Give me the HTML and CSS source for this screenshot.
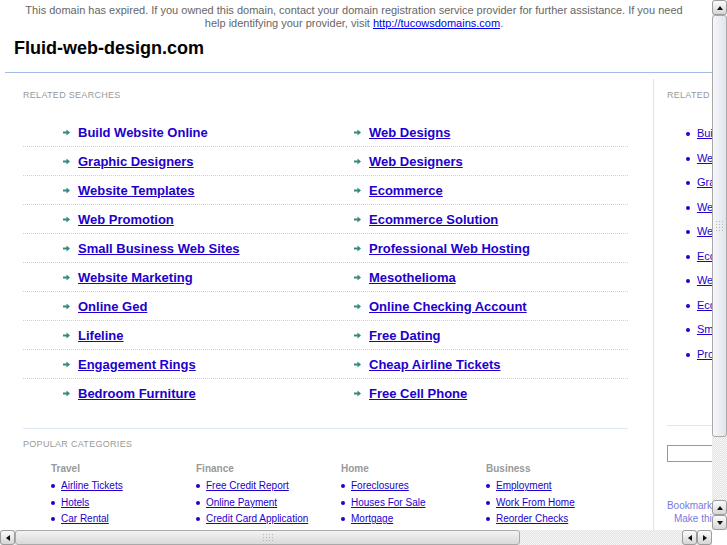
FILE: index.html
```html
<!DOCTYPE html>
<html lang="en">
<head>
  <meta charset="UTF-8" />
  <title>Fluid-web-design.com</title>
  <link rel="stylesheet" href="styles.css">
</head>
<body>
  <div class="page">
    <p class="notice">This domain has expired. If you owned this domain, contact your domain registration service provider for further assistance. If you need help identifying your provider, visit <a href="#">http://tucowsdomains.com</a>.</p>

    <div class="header">
      <h1>Fluid-web-design.com</h1>
    </div>

    <div class="main">
      <div class="content">
        <h3 class="label">Related Searches</h3>

        <!-- related searches, two per row -->
        <div class="searches">
          <div class="row">
            <div class="item"><svg class="arrow" viewBox="0 0 8 7"><path d="M0 2.4h4V0l4 3.5L4 7V4.6H0z"/></svg><a href="#" class="hover">Build Website Online</a></div>
            <div class="item"><svg class="arrow" viewBox="0 0 8 7"><path d="M0 2.4h4V0l4 3.5L4 7V4.6H0z"/></svg><a href="#">Web Designs</a></div>
          </div>
          <div class="row">
            <div class="item"><svg class="arrow" viewBox="0 0 8 7"><path d="M0 2.4h4V0l4 3.5L4 7V4.6H0z"/></svg><a href="#">Graphic Designers</a></div>
            <div class="item"><svg class="arrow" viewBox="0 0 8 7"><path d="M0 2.4h4V0l4 3.5L4 7V4.6H0z"/></svg><a href="#">Web Designers</a></div>
          </div>
          <div class="row">
            <div class="item"><svg class="arrow" viewBox="0 0 8 7"><path d="M0 2.4h4V0l4 3.5L4 7V4.6H0z"/></svg><a href="#">Website Templates</a></div>
            <div class="item"><svg class="arrow" viewBox="0 0 8 7"><path d="M0 2.4h4V0l4 3.5L4 7V4.6H0z"/></svg><a href="#">Ecommerce</a></div>
          </div>
          <div class="row">
            <div class="item"><svg class="arrow" viewBox="0 0 8 7"><path d="M0 2.4h4V0l4 3.5L4 7V4.6H0z"/></svg><a href="#">Web Promotion</a></div>
            <div class="item"><svg class="arrow" viewBox="0 0 8 7"><path d="M0 2.4h4V0l4 3.5L4 7V4.6H0z"/></svg><a href="#">Ecommerce Solution</a></div>
          </div>
          <div class="row">
            <div class="item"><svg class="arrow" viewBox="0 0 8 7"><path d="M0 2.4h4V0l4 3.5L4 7V4.6H0z"/></svg><a href="#">Small Business Web Sites</a></div>
            <div class="item"><svg class="arrow" viewBox="0 0 8 7"><path d="M0 2.4h4V0l4 3.5L4 7V4.6H0z"/></svg><a href="#">Professional Web Hosting</a></div>
          </div>
          <div class="row">
            <div class="item"><svg class="arrow" viewBox="0 0 8 7"><path d="M0 2.4h4V0l4 3.5L4 7V4.6H0z"/></svg><a href="#">Website Marketing</a></div>
            <div class="item"><svg class="arrow" viewBox="0 0 8 7"><path d="M0 2.4h4V0l4 3.5L4 7V4.6H0z"/></svg><a href="#">Mesothelioma</a></div>
          </div>
          <div class="row">
            <div class="item"><svg class="arrow" viewBox="0 0 8 7"><path d="M0 2.4h4V0l4 3.5L4 7V4.6H0z"/></svg><a href="#">Online Ged</a></div>
            <div class="item"><svg class="arrow" viewBox="0 0 8 7"><path d="M0 2.4h4V0l4 3.5L4 7V4.6H0z"/></svg><a href="#">Online Checking Account</a></div>
          </div>
          <div class="row">
            <div class="item"><svg class="arrow" viewBox="0 0 8 7"><path d="M0 2.4h4V0l4 3.5L4 7V4.6H0z"/></svg><a href="#">Lifeline</a></div>
            <div class="item"><svg class="arrow" viewBox="0 0 8 7"><path d="M0 2.4h4V0l4 3.5L4 7V4.6H0z"/></svg><a href="#">Free Dating</a></div>
          </div>
          <div class="row">
            <div class="item"><svg class="arrow" viewBox="0 0 8 7"><path d="M0 2.4h4V0l4 3.5L4 7V4.6H0z"/></svg><a href="#">Engagement Rings</a></div>
            <div class="item"><svg class="arrow" viewBox="0 0 8 7"><path d="M0 2.4h4V0l4 3.5L4 7V4.6H0z"/></svg><a href="#">Cheap Airline Tickets</a></div>
          </div>
          <div class="row">
            <div class="item"><svg class="arrow" viewBox="0 0 8 7"><path d="M0 2.4h4V0l4 3.5L4 7V4.6H0z"/></svg><a href="#">Bedroom Furniture</a></div>
            <div class="item"><svg class="arrow" viewBox="0 0 8 7"><path d="M0 2.4h4V0l4 3.5L4 7V4.6H0z"/></svg><a href="#">Free Cell Phone</a></div>
          </div>
        </div>

        <!-- popular categories -->
        <div class="popular">
          <h3 class="label">Popular Categories</h3>
          <div class="cats">
            <div class="cat">
              <h4>Travel</h4>
              <ul>
                <li><a href="#">Airline Tickets</a></li>
                <li><a href="#">Hotels</a></li>
                <li><a href="#">Car Rental</a></li>
              </ul>
            </div>
            <div class="cat">
              <h4>Finance</h4>
              <ul>
                <li><a href="#">Free Credit Report</a></li>
                <li><a href="#">Online Payment</a></li>
                <li><a href="#">Credit Card Application</a></li>
              </ul>
            </div>
            <div class="cat">
              <h4>Home</h4>
              <ul>
                <li><a href="#">Foreclosures</a></li>
                <li><a href="#">Houses For Sale</a></li>
                <li><a href="#">Mortgage</a></li>
              </ul>
            </div>
            <div class="cat">
              <h4>Business</h4>
              <ul>
                <li><a href="#">Employment</a></li>
                <li><a href="#">Work From Home</a></li>
                <li><a href="#">Reorder Checks</a></li>
              </ul>
            </div>
          </div>
        </div>
      </div>

      <div class="sidebar">
        <h3 class="label">Related Searches</h3>
        <ul class="side-links">
          <li><a href="#">Build Website Online</a></li>
          <li><a href="#">Web Designs</a></li>
          <li><a href="#">Graphic Designers</a></li>
          <li><a href="#">Website Templates</a></li>
          <li><a href="#">Web Designers</a></li>
          <li><a href="#">Ecommerce</a></li>
          <li><a href="#">Web Promotion</a></li>
          <li><a href="#">Ecommerce Solution</a></li>
          <li><a href="#">Small Business Web Sites</a></li>
          <li><a href="#">Professional Web Hosting</a></li>
        </ul>
        <div class="side-search">
          <input type="text" />
        </div>
        <div class="bookmark">
          <a href="#">Bookmark this page</a>
          <a href="#" class="home">Make this your homepage</a>
        </div>
      </div>
    </div>
  </div>

  <!-- window scrollbars -->
  <div class="vscroll">
    <span class="sb-btn"><i class="tri up"></i></span>
    <span class="sb-thumb v"><i class="grip"></i></span>
    <span class="sb-track"></span>
    <span class="sb-btn"><i class="tri up"></i></span>
    <span class="sb-btn"><i class="tri down"></i></span>
  </div>
  <div class="hscroll">
    <span class="sb-btn"><i class="tri left"></i></span>
    <span class="sb-thumb h"><i class="grip"></i></span>
    <span class="sb-track"></span>
    <span class="sb-btn"><i class="tri left"></i></span>
    <span class="sb-btn"><i class="tri right"></i></span>
  </div>
  <div class="sb-corner"></div>
</body>
</html>
```

FILE: styles.css
```css
html {
  overflow: hidden;
}

body {
  margin: 0;
  background: #fff;
  color: #000;
  font-family: "Liberation Sans", Arial, sans-serif;
}

.page {
  width: 940px;
}

.notice {
  width: 680px;
  margin: 4px 0 0 14px;
  font-size: 11px;
  line-height: 13px;
  color: #666;
  text-align: center;
}

.notice a {
  color: #00e;
}

.header {
  margin-left: 5px;
  padding: 7px 9px 13px;
  border-bottom: 1px solid #a6bce6;
}

.header h1 {
  margin: 0;
  font-size: 18px;
  line-height: 22px;
}

.main {
  display: flex;
  margin: 6px 0 0 5px;
}

.content {
  width: 632px;
  padding: 11px 0 80px 18px;
  border-right: 1px solid #dae3f2;
}

.label {
  margin: 0;
  font-size: 9px;
  line-height: 11px;
  font-weight: normal;
  color: #999;
  text-transform: uppercase;
  letter-spacing: 0.3px;
}

.searches {
  width: 605px;
  margin-top: 17px;
}

.row {
  display: flex;
  height: 28px;
  border-bottom: 1px dotted #c2d3ee;
}

.row:last-child {
  border-bottom: 0;
}

.item {
  display: flex;
  align-items: center;
  width: 251px;
  padding-left: 40px;
}

.arrow {
  width: 7px;
  height: 7px;
  margin-right: 8px;
  fill: #348a7f;
}

.item a {
  font-size: 13px;
  font-weight: bold;
  color: #2200cc;
}

.item a.hover {
  text-decoration: none;
}

.popular {
  width: 605px;
  margin-top: 21px;
  padding-top: 10px;
  border-top: 1px solid #dfe7f4;
}

.cats {
  display: grid;
  grid-template-columns: repeat(4, 145px);
  margin-top: 13px;
  padding-left: 28px;
}

.cats h4 {
  margin: 0 0 3px;
  font-size: 10px;
  line-height: 12px;
  color: #999;
}

.cats ul,
.side-links {
  list-style: none;
  margin: 0;
  padding: 0;
}

.cats li {
  font-size: 10px;
  line-height: 16.5px;
}

.cats li::before,
.side-links li::before {
  content: "";
  display: inline-block;
  width: 4px;
  height: 4px;
  margin-right: 6px;
  border-radius: 50%;
  background: #2200cc;
  vertical-align: middle;
}

.cats a,
.side-links a {
  color: #2200cc;
}

.sidebar {
  width: 274px;
  padding: 11px 0 0 13px;
}

.side-links {
  margin-top: 20px;
  padding-left: 19px;
}

.side-links li {
  font-size: 11px;
  line-height: 24.5px;
}

.side-links li::before {
  margin-right: 7px;
}

.side-search {
  margin-top: 59px;
  padding-top: 19px;
  border-top: 1px solid #dfe7f4;
}

.side-search input {
  display: block;
  width: 200px;
  height: 17px;
  box-sizing: border-box;
  margin: 0;
  padding: 0;
  border: 1px solid #999;
}

.bookmark {
  margin-top: 37px;
  font-size: 10px;
  line-height: 13px;
}

.bookmark a {
  display: block;
  color: #7a7ade;
  text-decoration: none;
}

.bookmark a.home {
  padding-left: 7px;
}

/* scrollbars */
.vscroll,
.hscroll {
  position: fixed;
  display: flex;
  background: repeating-conic-gradient(#e2e2e2 0 25%, #f7f7f7 0 50%) 0 0 / 2px 2px;
}

.vscroll {
  top: 0;
  right: 0;
  width: 15px;
  height: 530px;
  flex-direction: column;
}

.hscroll {
  left: 0;
  bottom: 0;
  width: 712px;
  height: 15px;
}

.sb-corner {
  position: fixed;
  right: 0;
  bottom: 0;
  width: 15px;
  height: 15px;
  background: #fff;
}

.sb-btn {
  flex: none;
  display: flex;
  align-items: center;
  justify-content: center;
  width: 15px;
  height: 15px;
  box-sizing: border-box;
  border: 1px solid #9c9c9c;
  border-radius: 3px;
  background: linear-gradient(#fbfbfb, #d6d6d6);
}

.sb-thumb {
  flex: none;
  display: flex;
  align-items: center;
  justify-content: center;
  box-sizing: border-box;
  border: 1px solid #a9a9a9;
  border-radius: 3px;
}

.sb-thumb.v {
  height: 422px;
  background: linear-gradient(to right, #f6f7fc, #e2e4ed);
}

.sb-thumb.h {
  width: 505px;
  background: linear-gradient(#f3f3f3, #d9d9d9);
}

.sb-track {
  flex: 1;
}

.grip {
  width: 9px;
  height: 12px;
  background: radial-gradient(circle, #b5b5b5 0.7px, transparent 0.9px) 0 0 / 3px 3px;
}

.sb-thumb.h .grip {
  width: 12px;
  height: 9px;
}

.tri {
  width: 0;
  height: 0;
  border: 0 solid transparent;
}

.tri.up {
  border-width: 0 3.5px 4px;
  border-bottom-color: #111;
}

.tri.down {
  border-width: 4px 3.5px 0;
  border-top-color: #111;
}

.tri.left {
  border-width: 3.5px 4px 3.5px 0;
  border-right-color: #111;
}

.tri.right {
  border-width: 3.5px 0 3.5px 4px;
  border-left-color: #111;
}
```
